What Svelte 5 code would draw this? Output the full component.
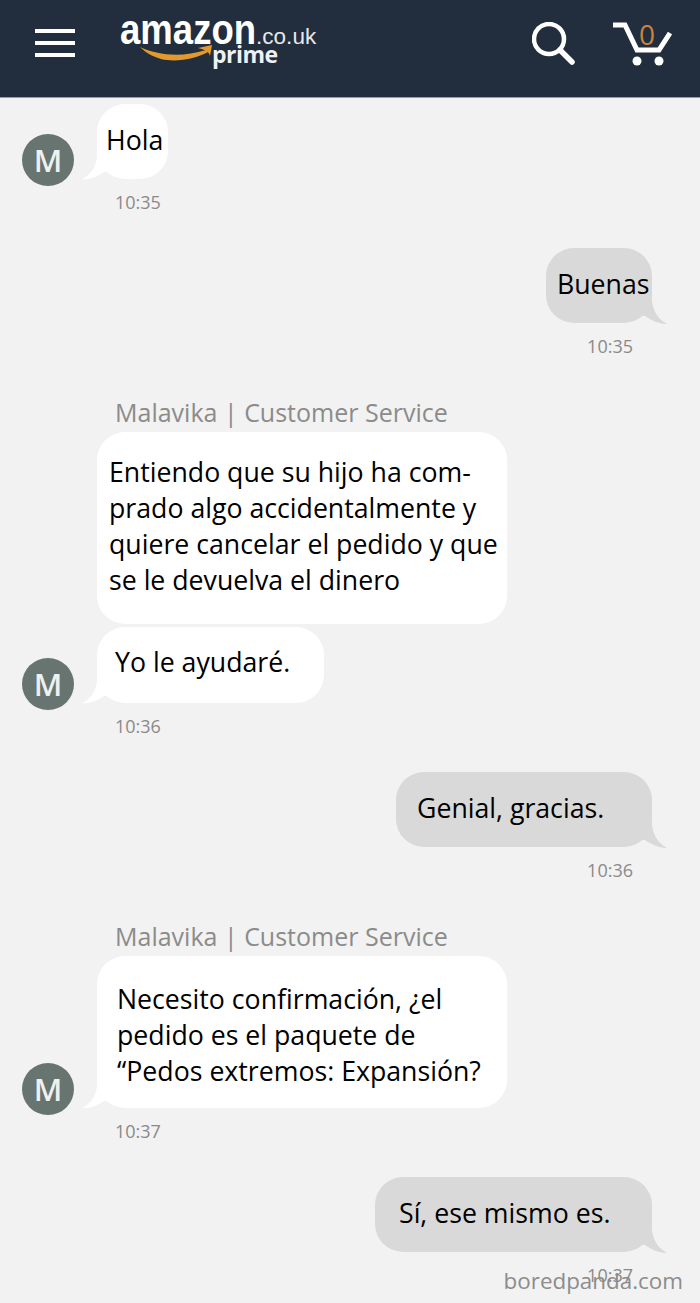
<script lang="ts">
  /**
   * Customer service chat
   */
  const turns = [
    {
      side: 'in',
      time: '10:35',
      bubbles: [{ lines: ['Hola'], width: 71, height: 75, pad: 9, top: 18 }],
    },
    {
      side: 'out',
      time: '10:35',
      bubbles: [{ lines: ['Buenas'], width: 106, height: 75, pad: 11, top: 18 }],
    },
    {
      side: 'in',
      name: 'Malavika | Customer Service',
      time: '10:36',
      bubbles: [
        {
          lines: [
            'Entiendo que su hijo ha com-',
            'prado algo accidentalmente y',
            'quiere cancelar el pedido y que',
            'se le devuelva el dinero',
          ],
          width: 410,
          height: 192,
          pad: 12,
          top: 22,
          noTail: true,
        },
        { lines: ['Yo le ayudaré.'], width: 227, height: 76, pad: 18, top: 17 },
      ],
    },
    {
      side: 'out',
      time: '10:36',
      bubbles: [{ lines: ['Genial, gracias.'], width: 256, height: 75, pad: 21, top: 18 }],
    },
    {
      side: 'in',
      name: 'Malavika | Customer Service',
      time: '10:37',
      bubbles: [
        {
          lines: [
            'Necesito confirmación, ¿el',
            'pedido es el paquete de',
            '“Pedos extremos: Expansión?',
          ],
          width: 410,
          height: 152,
          pad: 20,
          top: 25,
        },
      ],
    },
    {
      side: 'out',
      time: '10:37',
      bubbles: [{ lines: ['Sí, ese mismo es.'], width: 277, height: 75, pad: 24, top: 18 }],
    },
  ];
</script>

<div class="page">
  <header class="topbar">
    <div class="burger"><span></span><span></span><span></span></div>

    <div class="logo">
      <div class="logo__main"><span class="logo__word">amazon</span><span class="logo__tld">.co.uk</span></div>
      <div class="logo__prime">prime</div>
      <svg class="logo__smile" width="84" height="20" viewBox="0 0 84 20">
        <path d="M1 2 C18 10 42 13 67 5 L69 7 C58 13 38 18 22 14 C12 11 6 7 1 2 Z" fill="#e39a2c" />
        <path d="M59 3 L73 0 L71 11 C70 7 67 5 59 3 Z" fill="#e39a2c" />
      </svg>
    </div>

    <div class="actions">
      <svg class="search" width="44" height="46" viewBox="0 0 44 46">
        <circle cx="17" cy="17" r="15" fill="none" stroke="#fff" stroke-width="4.5" />
        <path d="M28 28 L40 40" stroke="#fff" stroke-width="5.5" stroke-linecap="round" />
      </svg>
      <div class="cart">
        <svg width="60" height="46" viewBox="0 0 60 46">
          <path d="M1 3 H13 L25 28 H47 L58 11" fill="none" stroke="#fff" stroke-width="5" stroke-linejoin="miter" />
          <circle cx="25" cy="39" r="4.5" fill="#fff" />
          <circle cx="47" cy="39" r="4.5" fill="#fff" />
        </svg>
        <span class="cart__count">0</span>
      </div>
    </div>
  </header>

  <main class="chat">
    {#each turns as turn}
      <section class="turn turn--{turn.side}" class:turn--named={turn.name}>
        {#if turn.name}
          <div class="name">{turn.name}</div>
        {/if}
        <div class="bubbles">
          {#each turn.bubbles as b}
            <div class="row">
              {#if turn.side === 'in' && !b.noTail}
                <div class="avatar">M</div>
              {/if}
              <div
                class="bubble"
                style="width:{b.width}px;height:{b.height}px;padding-left:{b.pad}px;padding-top:{b.top}px"
              >
                {#if !b.noTail}
                  <svg class="tail" width="24" height="28" viewBox="0 0 24 28">
                    {#if turn.side === 'in'}
                      <path d="M24 0 H15.5 C15 12 11 22 0 27 C7 28 15 25 22 20 L24 20 Z" />
                    {:else}
                      <path d="M0 0 H8.5 C9 12 13 22 24 28 C17 28 9 25 2 20 L0 20 Z" />
                    {/if}
                  </svg>
                {/if}
                {#each b.lines as line}
                  <div>{line}</div>
                {/each}
              </div>
            </div>
          {/each}
        </div>
        <div class="time">{turn.time}</div>
      </section>
    {/each}
  </main>

  <div class="watermark">boredpanda.com</div>
</div>

<style>
  :global(body) {
    background: #f2f2f2;
  }

  .page {
    position: relative;
    height: 1303px;
    overflow: hidden;
    background: #f2f2f2;
    font-family: 'Open Sans', 'Noto Sans', sans-serif;
  }

  /* Header */
  .topbar {
    display: flex;
    align-items: flex-start;
    height: 97px;
    box-sizing: content-box;
    background: #222d3d;
    border-bottom: 1px solid #9a9fa5;
  }

  .burger {
    display: flex;
    flex-direction: column;
    gap: 8px;
    width: 40px;
    margin: 29px 0 0 35px;
  }

  .burger span {
    height: 4px;
    background: #fff;
  }

  .logo {
    position: relative;
    width: 200px;
    margin: 4px 0 0 45px;
    color: #fff;
    font-family: 'Liberation Sans', Arial, sans-serif;
  }

  .logo__main {
    display: flex;
    align-items: baseline;
    line-height: 50px;
    white-space: nowrap;
  }

  .logo__word {
    display: inline-block;
    margin-right: -24px;
    font-size: 43px;
    font-weight: 700;
    transform: scaleX(0.85);
    transform-origin: left center;
  }

  .logo__tld {
    font-size: 22.5px;
    font-weight: 400;
    color: #e6e8ea;
  }

  .logo__prime {
    position: absolute;
    left: 92px;
    top: 36px;
    font-family: 'Open Sans', sans-serif;
    font-size: 23px;
    font-weight: 700;
    letter-spacing: -0.5px;
    line-height: 28px;
    color: #eef0f2;
  }

  .logo__smile {
    position: absolute;
    left: 19px;
    top: 41px;
  }

  .actions {
    display: flex;
    align-items: flex-start;
    gap: 36px;
    margin: 22px 0 0 auto;
    padding-right: 28px;
  }

  .cart {
    position: relative;
    width: 60px;
    height: 46px;
  }

  .cart__count {
    position: absolute;
    left: 27px;
    top: -4px;
    font-size: 28px;
    line-height: 32px;
    color: #c8843f;
  }

  /* Messages */
  .chat {
    display: flex;
    flex-direction: column;
    gap: 36px;
    padding-top: 6px;
  }

  .turn {
    display: flex;
    flex-direction: column;
  }

  .turn--out {
    align-items: flex-end;
    padding-right: 48px;
  }

  .turn--in {
    padding-left: 22px;
  }

  .turn--named {
    margin-top: 8px;
  }

  .name {
    margin: 0 0 8px 93px;
    font-size: 25px;
    line-height: 24px;
    color: #8b8b8b;
    white-space: nowrap;
  }

  .bubbles {
    display: flex;
    flex-direction: column;
    gap: 3px;
  }

  .row {
    display: flex;
    align-items: flex-end;
    justify-content: flex-end;
  }

  .turn--in .row {
    justify-content: flex-start;
    padding-left: 75px;
  }

  .avatar {
    display: flex;
    flex: none;
    align-items: center;
    justify-content: center;
    width: 52px;
    height: 52px;
    margin: 0 23px -7px -75px;
    border-radius: 50%;
    background: #68746f;
    color: #eef1f0;
    font-size: 31px;
    font-weight: 600;
    line-height: 1;
  }

  .bubble {
    position: relative;
    box-sizing: border-box;
    border-radius: 28px;
    font-size: 26.7px;
    line-height: 36px;
    color: #000;
    white-space: nowrap;
  }

  .turn--in .bubble {
    background: #fff;
  }

  .turn--out .bubble {
    background: #d9d9d9;
  }

  .tail {
    position: absolute;
    bottom: -1px;
  }

  .turn--in .tail {
    left: -15px;
    fill: #fff;
  }

  .turn--out .tail {
    right: -15px;
    fill: #d9d9d9;
  }

  .time {
    margin-top: 13px;
    font-size: 18px;
    line-height: 20px;
    color: #8a8a8a;
  }

  .turn--in .time {
    margin-left: 93px;
  }

  .turn--out .time {
    margin-right: 19px;
  }

  .watermark {
    position: absolute;
    right: 17px;
    bottom: 6px;
    font-size: 22.4px;
    line-height: 32px;
    color: #8c8c8c;
  }
</style>
